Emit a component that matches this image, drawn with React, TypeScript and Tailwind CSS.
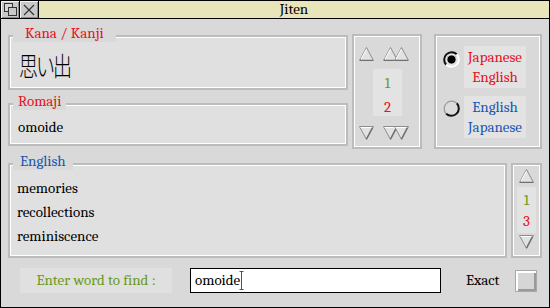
import type { ReactNode } from "react"

function UpArrow({ double = false }: { double?: boolean }) {
  const tri = (x: number) => (
    <g key={x}>
      <polygon points={`${x + 7.5},0.5 ${x + 0.5},13.5 ${x + 14.5},13.5`} fill="#e2e2e2" stroke="#8c8c8c" strokeWidth="1" />
      <line x1={x + 7.5} y1={2} x2={x + 2} y2={12} stroke="#ffffff" strokeWidth="1" />
      <line x1={x + 1} y1={13.5} x2={x + 14} y2={13.5} stroke="#6e6e6e" strokeWidth="1.5" />
    </g>
  )
  return (
    <svg width={double ? 26 : 15} height={14} viewBox={`0 0 ${double ? 26 : 15} 14`}>
      {tri(0)}
      {double && tri(11)}
    </svg>
  )
}

function DownArrow({ double = false }: { double?: boolean }) {
  const tri = (x: number) => (
    <g key={x}>
      <polygon points={`${x + 0.5},0.5 ${x + 14.5},0.5 ${x + 7.5},13.5`} fill="#e2e2e2" stroke="#8c8c8c" strokeWidth="1" />
      <line x1={x + 1.5} y1={1.5} x2={x + 13.5} y2={1.5} stroke="#ffffff" strokeWidth="1" />
      <line x1={x + 13.5} y1={1.5} x2={x + 7.5} y2={13} stroke="#6e6e6e" strokeWidth="1.5" />
    </g>
  )
  return (
    <svg width={double ? 26 : 15} height={14} viewBox={`0 0 ${double ? 26 : 15} 14`}>
      {tri(0)}
      {double && tri(11)}
    </svg>
  )
}

function Radio({ on }: { on: boolean }) {
  return (
    <svg width="17" height="17" viewBox="0 0 17 17" className="shrink-0">
      <circle cx="8.5" cy="8.5" r="7.5" fill="#dcdcdc" />
      <path d="M3.2 13.8 A7.5 7.5 0 0 1 13.8 3.2" fill="none" stroke={on ? "#111" : "#9a9a9a"} strokeWidth={on ? 2 : 1.2} />
      <path d="M13.8 3.2 A7.5 7.5 0 0 1 3.2 13.8" fill="none" stroke={on ? "#ffffff" : "#111"} strokeWidth="2" />
      {on && <circle cx="8.5" cy="8.5" r="4.6" fill="#000" stroke="#fff" strokeWidth="0.8" />}
    </svg>
  )
}

function Frame({
  label,
  labelClass,
  className,
  children,
}: {
  label?: string
  labelClass?: string
  className?: string
  children?: ReactNode
}) {
  return (
    <div className={`relative border-2 border-[#bcbcbc] shadow-[inset_0_0_0_1px_#ffffff] ${className ?? ""}`}>
      {label && (
        <span className={`absolute top-[-12px] left-[3px] h-[17px] leading-[17px] bg-[#d9d9d9] text-[15px] ${labelClass ?? ""}`}>
          {label}
        </span>
      )}
      {children}
    </div>
  )
}

export default function App() {
  return (
    <div className="w-[550px] h-[308px] border border-black bg-[#d9d9d9] flex flex-col overflow-hidden font-serif text-black">
      {/* title bar */}
      <div className="h-[18px] flex border-b border-black shrink-0">
        <div className="w-[19px] border-r border-black bg-[#c9c9c9] shadow-[inset_1px_1px_0_#f4f4f4,inset_-1px_-1px_0_#8a8a8a] flex items-center justify-center">
          <svg width="13" height="13" viewBox="0 0 13 13">
            <rect x="0.5" y="0.5" width="8" height="8" fill="#d6d6d6" stroke="#333" />
            <rect x="4.5" y="4.5" width="8" height="8" fill="#c9c9c9" stroke="#333" />
          </svg>
        </div>
        <div className="w-[19px] border-r border-black bg-[#c9c9c9] shadow-[inset_1px_1px_0_#f4f4f4,inset_-1px_-1px_0_#8a8a8a] flex items-center justify-center">
          <svg width="12" height="12" viewBox="0 0 12 12">
            <path d="M1 1 L11 11 M11 1 L1 11" stroke="#333" strokeWidth="1.2" />
          </svg>
        </div>
        <div className="flex-1 bg-[#e9e5bb] flex items-center justify-center text-[15px] leading-none">Jiten</div>
      </div>

      <div className="px-[7px] flex flex-col">
        {/* top row */}
        <div className="mt-[15px] flex items-start">
          <div className="w-[340px] flex flex-col">
            <Frame label="Kana / Kanji" labelClass="px-[12px] text-[#e3121b]" className="mt-[1px] h-[55px] bg-[#e0e0e0] flex items-center pl-[9px] pt-[3px]">
              <span className="inline-block scale-y-[1.35] text-[19px] leading-none tracking-[-2px] font-extralight font-[family-name:Noto_Sans_CJK_JP,sans-serif]">思い出</span>
            </Frame>
            <Frame label="Romaji" labelClass="px-[5px] text-[#e3121b]" className="mt-[13px] h-[43px] bg-[#e0e0e0] pl-[8px] pt-[12px]">
              <div className="text-[15px] leading-[20px]">omoide</div>
            </Frame>
          </div>

          <Frame className="ml-[4px] w-[70px] h-[115px] flex flex-col pl-[5px] pt-[11px]">
            <div className="flex items-end gap-[9px]">
              <UpArrow />
              <UpArrow double />
            </div>
            <div className="mt-[8px] ml-[14px] w-[29px] h-[47px] bg-[#e3e3e3] flex flex-col items-center pt-[2px] text-[15px] leading-[24px]">
              <span className="text-[#6a9a1a]">1</span>
              <span className="text-[#e3121b]">2</span>
            </div>
            <div className="mt-[10px] flex items-start gap-[9px]">
              <DownArrow />
              <DownArrow double />
            </div>
          </Frame>

          <Frame className="ml-[12px] w-[108px] h-[115px] flex flex-col pl-[7px] pt-[10px] gap-[8px]">
            <div className="flex items-start gap-[4px]">
              <div className="mt-[5px]">
                <Radio on />
              </div>
              <div className="w-[62px] bg-[#e3e3e3] py-[1px] flex flex-col items-center text-[15px] leading-[20px] text-[#e3121b]">
                <span>Japanese</span>
                <span>English</span>
              </div>
            </div>
            <div className="flex items-start gap-[4px]">
              <div className="mt-[4px]">
                <Radio on={false} />
              </div>
              <div className="w-[62px] bg-[#e3e3e3] py-[1px] flex flex-col items-center text-[15px] leading-[20px] text-[#1a56b0]">
                <span>English</span>
                <span>Japanese</span>
              </div>
            </div>
          </Frame>
        </div>

        {/* English row */}
        <div className="mt-[14px] h-[95px] flex">
          <Frame label="English" labelClass="px-[7px] text-[#1a56b0]" className="w-[499px] h-full bg-[#e0e0e0] pl-[7px] pt-[11px]">
            <div className="flex flex-col text-[15px] leading-[24px]">
              <span>memories</span>
              <span>recollections</span>
              <span>reminiscence</span>
            </div>
          </Frame>
          <Frame className="ml-[4px] w-[31px] h-full flex flex-col items-center">
            <div className="mt-[4px]">
              <UpArrow />
            </div>
            <div className="mt-[4px] w-[19px] h-[46px] bg-[#e3e3e3] flex flex-col items-center pt-[3px] text-[15px] leading-[21px]">
              <span className="text-[#6a9a1a]">1</span>
              <span className="text-[#e3121b]">3</span>
            </div>
            <div className="mt-[2px]">
              <DownArrow />
            </div>
          </Frame>
        </div>

        {/* search row */}
        <div className="mt-[10px] h-[25px] flex items-center text-[15px]">
          <div className="ml-[12px] w-[152px] h-[25px] bg-[#e0e0e0] flex items-center justify-center text-[#6a9a1a]">
            Enter word to find :
          </div>
          <div className="ml-[18px] w-[251px] h-[25px] bg-white border border-black flex items-center pl-[4px]">
            <span>omoide</span>
            <svg width="5" height="19" viewBox="0 0 5 19" className="ml-[-1px]">
              <path d="M2.5 0 V19 M0.5 0.5 H4.5 M0.5 18.5 H4.5" stroke="#e3121b" strokeWidth="1" />
            </svg>
          </div>
          <span className="ml-[25px]">Exact</span>
          <div className="ml-[16px] w-[22px] h-[22px] bg-[#d6d6d6] border border-[#a8a8a8] shadow-[inset_2px_2px_0_#ffffff,inset_-2px_-2px_0_#9a9a9a]" />
        </div>
      </div>
    </div>
  )
}
